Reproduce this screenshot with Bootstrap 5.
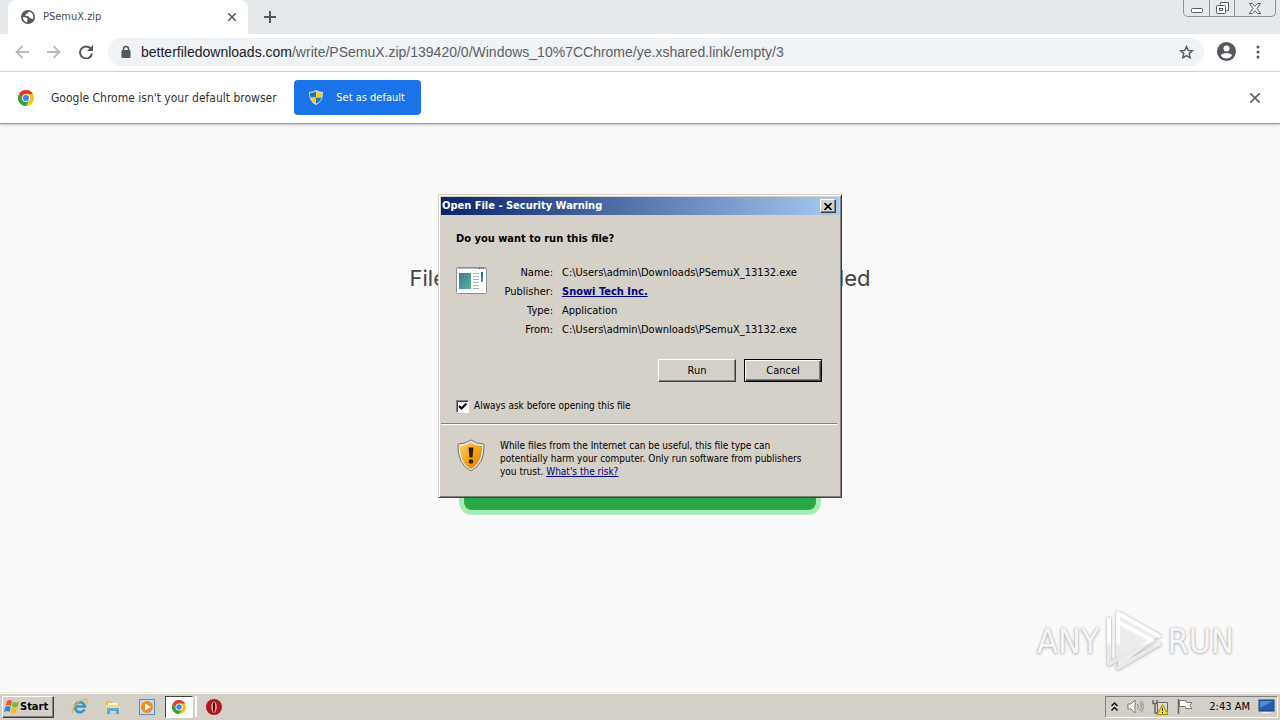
<!DOCTYPE html>
<html lang="en">
<head>
    <meta charset="UTF-8">
    <meta name="viewport" content="width=device-width, initial-scale=1.0">
    <title>PSemuX.zip</title>
    <link href="https://cdn.jsdelivr.net/npm/bootstrap@5.3.0/dist/css/bootstrap.min.css" rel="stylesheet">
    <style>
        body {
            font-family: "DejaVu Sans Condensed", "DejaVu Sans", sans-serif;
            font-size: 11px;
            line-height: 16px;
            color: #000;
            background: #f9f9f9;
        }
        svg { display: block; flex: none; }
        button { font-family: inherit; }
        .plain-btn {
            border: 0;
            padding: 0;
            background: none;
            display: flex;
            align-items: center;
            justify-content: center;
        }

        /* browser */
        .tab-strip { height: 34px; background: #e5e9ec; padding-left: 8px; }
        .page-tab {
            width: 240px;
            height: 34px;
            padding: 0 8px 0 13px;
            gap: 8px;
            background: #fff;
            border-radius: 8px 8px 0 0;
            color: #4a4d51;
        }
        .new-tab { width: 28px; height: 34px; margin-left: 8px; }
        .win-controls {
            height: 17px;
            margin-right: 4px;
            border: 1px solid #8c9196;
            border-top: 0;
            border-radius: 0 0 5px 5px;
        }
        .win-controls button { width: 25px; }
        .win-controls button + button { border-left: 1px solid #8c9196; }
        .win-controls button:last-child { width: 41px; }
        .toolbar { height: 38px; padding: 0 6px 2px; background: #fff; border-bottom: 1px solid #d5d7d9; }
        .tool { width: 32px; height: 32px; }
        .address-bar {
            height: 28px;
            margin: 0 6px;
            padding: 0 10px 0 12px;
            gap: 9px;
            border-radius: 14px;
            background: #f0f3f5;
            font: 14px/28px "Liberation Sans", sans-serif;
            color: #5c6064;
        }
        .address-bar b { font-weight: normal; color: #202124; }
        .default-bar {
            height: 52px;
            padding: 0 16px 0 18px;
            gap: 17px;
            background: #fff;
            border-bottom: 1px solid #97999b;
            box-shadow: 0 1px 3px #c4c4c4;
            font-size: 12px;
            color: #333;
        }
        .default-btn {
            height: 35px;
            width: 127px;
            gap: 13px;
            border-radius: 4px;
            background: #1a73e8;
            color: #fff;
            font-size: 11px;
        }

        /* page behind the dialog */
        .download-page { padding-top: 138px; color: #444; font: 22px/32px Inter, sans-serif; }
        .download-page h1 { width: 461px; font: inherit; }
        .download-btn {
            width: 352px;
            height: 60px;
            margin-top: 156px;
            border: 0;
            border-radius: 8px;
            background: #28a745;
            box-shadow: 0 0 0 5px #a9e8b8;
        }
        .watermark {
            right: 46px;
            bottom: 20px;
            gap: 5px;
            font: 34px/60px "Liberation Sans Narrow", "DejaVu Sans Condensed", sans-serif;
            color: #f6f6f6;
            text-shadow: 0 0 2px #aaa, 0 1px 3px #bbb;
        }
        .watermark svg { filter: drop-shadow(0 0 1px #aaa) drop-shadow(0 1px 1px #ddd); }

        /* classic dialog */
        .dialog-box {
            width: 404px;
            padding: 1px;
            background: #d5d0c8;
            border: 1px solid;
            border-color: #d4d0c8 #404040 #404040 #d4d0c8;
            box-shadow: inset 1px 1px #fff, inset -1px -1px #808080;
        }
        .dialog-title {
            height: 18px;
            margin: 1px 1px 0;
            padding: 0 3px 0 1px;
            background: linear-gradient(90deg, #0a246a, #a6caf0);
            color: #fff;
            font-size: 11px;
            line-height: 18px;
            font-weight: bold;
        }
        .raised {
            border: 1px solid;
            border-color: #fff #404040 #404040 #fff;
            box-shadow: inset -1px -1px #808080;
            background: #d4d0c8;
            color: #000;
            padding: 0;
        }
        .dialog-close { width: 16px; height: 14px; }
        .dialog-main { padding: 16px 18px 9px 16px; }
        .file-facts { grid-template-columns: 58px 1fr; column-gap: 9px; line-height: 19px; }
        .file-facts dt { font-weight: normal; text-align: right; }
        .dialog-box a { color: #000080; }
        .dialog-btn { width: 78px; height: 23px; }
        .dialog-btn.is-default { border: 1px solid #000; box-shadow: inset 1px 1px #fff, inset -1px -1px #404040, inset -2px -2px #808080; }
        .ask-check {
            appearance: none;
            width: 13px;
            height: 13px;
            margin: 0 5px 0 0;
            border: 1px solid;
            border-color: #808080 #fff #fff #808080;
            box-shadow: inset 1px 1px #404040;
            background: #fff;
        }
        .ask-check:checked {
            background: #fff url("data:image/svg+xml,%3Csvg xmlns='http://www.w3.org/2000/svg' viewBox='0 0 11 11'%3E%3Cpath d='M2 5l2.500 2.500 5-5' fill='none' stroke='%23000' stroke-width='2.200'/%3E%3C/svg%3E");
        }
        .ask-row label, .dialog-note p { font-size: 10px; }
        .groove { height: 2px; margin: 0 3px 0 1px; border-top: 1px solid #808080; border-bottom: 1px solid #fff; }
        .dialog-note { padding: 14px 30px 18px 17px; gap: 15px; }
        .dialog-note p { line-height: 13px; }

        /* taskbar */
        .taskbar { height: 28px; padding: 0 2px; background: #d4d0c8; border-top: 1px solid #ece9e2; box-shadow: inset 0 1px #fff; }
        .start-btn { width: 52px; height: 22px; font-weight: bold; }
        .quick { width: 34px; height: 22px; }
        .running { width: 28px; height: 22px; margin: 0 2px 0 1px; border: 1px solid; border-color: #404040 #fff #fff #404040; background: #fff; }
        .tray { height: 22px; padding: 0 2px 0 4px; gap: 8px; border: 1px solid; border-color: #808080 #fff #fff #808080; }
    </style>
</head>
<body>
    <!-- shared logo artwork -->
    <svg class="position-absolute" width="0" height="0" aria-hidden="true">
        <symbol id="chrome-logo" viewBox="0 0 16 16">
            <circle cx="8" cy="8" r="8" fill="#fbc116"/>
            <path d="M8 8L4.540 10 1.070 4A8 8 0 0 0 8 16l3.460-6z" fill="#34a046"/>
            <path d="M1.070 4A8 8 0 0 1 14.930 4H8L4.540 10z" fill="#e23b2e"/>
            <circle cx="8" cy="8" r="4" fill="#fff"/>
            <circle cx="8" cy="8" r="3.100" fill="#4285f4"/>
        </symbol>
    </svg>

    <div class="d-flex flex-column vh-100">
        <div class="flex-grow-1 d-flex flex-column position-relative overflow-hidden">
            <header>
                <div class="tab-strip d-flex align-items-start">
                    <div class="page-tab d-flex align-items-center">
                        <svg width="14" height="14" viewBox="0 0 14 14"><circle cx="7" cy="7" r="7" fill="#54585d"/><path d="M2 7l3 .500 2 1.500-1 1 .500 2.500C3.500 12 2 10 1.800 8zM7.500 1.700l-1 1.800-1.800.500-.200 2 3 .200L9 8.300l3 .700C13.200 5 11.500 2 7.500 1.700z" fill="#fff"/></svg>
                        <span class="flex-grow-1">PSemuX.zip</span>
                        <button class="plain-btn p-1" aria-label="Close tab"><svg width="8" height="8" viewBox="0 0 8 8"><path d="M0 0l8 8M8 0L0 8" stroke="#54585d" stroke-width="1.500"/></svg></button>
                    </div>
                    <button class="plain-btn new-tab" aria-label="New tab"><svg width="12" height="12" viewBox="0 0 12 12"><path d="M6 0v12M0 6h12" stroke="#54585d" stroke-width="2"/></svg></button>
                    <div class="win-controls d-flex ms-auto">
                        <button class="plain-btn" aria-label="Minimize"><svg width="12" height="14" viewBox="0 0 12 14"><rect x=".500" y="7.500" width="11" height="4" rx="1" fill="#fff" stroke="#555b66"/></svg></button>
                        <button class="plain-btn" aria-label="Restore"><svg width="13" height="14" viewBox="0 0 13 14"><path d="M4.500 3.500v-2h8v8h-2" fill="#fff" stroke="#555b66"/><rect x=".500" y="4.500" width="9" height="8" rx="1" fill="#fff" stroke="#555b66"/><rect x="3.500" y="7.500" width="3" height="2" fill="none" stroke="#555b66"/></svg></button>
                        <button class="plain-btn" aria-label="Close"><svg width="12" height="11" viewBox="0 0 12 11"><path d="M.500.500h3l2.500 3 2.500-3h3L8 5.500l3.500 5h-3L6 7.500l-2.500 3h-3L4 5.500z" fill="#fff" stroke="#555b66"/></svg></button>
                    </div>
                </div>

                <nav class="toolbar d-flex align-items-center">
                    <button class="plain-btn tool" aria-label="Back"><svg width="14" height="14" viewBox="0 0 14 14"><path d="M14 7H1.500M7.500 1l-6 6 6 6" fill="none" stroke="#b9bbbe" stroke-width="1.800"/></svg></button>
                    <button class="plain-btn tool" aria-label="Forward"><svg width="14" height="14" viewBox="0 0 14 14"><path d="M0 7h12.500M6.500 1l6 6-6 6" fill="none" stroke="#b9bbbe" stroke-width="1.800"/></svg></button>
                    <button class="plain-btn tool" aria-label="Reload"><svg width="14" height="14" viewBox="0 0 14 14"><path d="M12 4A6 6 0 1 0 13 8.500" fill="none" stroke="#54585d" stroke-width="2"/><path d="M14 0v6H8z" fill="#54585d"/></svg></button>
                    <div class="address-bar flex-grow-1 d-flex align-items-center">
                        <svg width="12" height="14" viewBox="0 0 12 14"><path d="M3.500 6V4a2.500 2.500 0 0 1 5 0v2" fill="none" stroke="#54585d" stroke-width="1.500"/><rect x="1.500" y="5" width="9" height="8" rx="1" fill="#54585d"/></svg>
                        <span class="flex-grow-1"><b>betterfiledownloads.com</b>/write/PSemuX.zip/139420/0/Windows_10%7CChrome/ye.xshared.link/empty/3</span>
                        <button class="plain-btn" aria-label="Bookmark"><svg width="15" height="14" viewBox="0 0 15 14"><path d="M7.500 1.500l1.700 3.900 4.200.400-3.200 2.800 1 4.200-3.700-2.200-3.700 2.200 1-4.200-3.200-2.800 4.200-.400z" fill="none" stroke="#54585d" stroke-width="1.400"/></svg></button>
                    </div>
                    <button class="plain-btn tool" aria-label="Profile"><svg width="19" height="19" viewBox="0 0 19 19"><circle cx="9.500" cy="9.500" r="9.500" fill="#54585d"/><circle cx="9.500" cy="6.500" r="3" fill="#fff"/><path d="M3.800 13.500c1-3.500 10.400-3.500 11.400 0a7 7 0 0 1-11.400 0z" fill="#fff"/></svg></button>
                    <button class="plain-btn tool" aria-label="Menu"><svg width="4" height="14" viewBox="0 0 4 14"><g fill="#54585d"><circle cx="2" cy="2" r="1.500"/><circle cx="2" cy="7" r="1.500"/><circle cx="2" cy="12" r="1.500"/></g></svg></button>
                </nav>

                <div class="default-bar d-flex align-items-center">
                    <svg width="16" height="16"><use href="#chrome-logo"/></svg>
                    <span>Google Chrome isn't your default browser</span>
                    <button class="default-btn plain-btn">
                        <svg width="14" height="15" viewBox="0 0 14 15"><path d="M7 0q3 2 7 2 0 10-7 13Q0 12 0 2q4 0 7-2z" fill="#d8e6f0"/><path d="M7 1.300V7.500H1.300Q1 5 1 3q3.500 0 6-1.700zM7 7.500h5.500Q11.500 12 7 13.800z" fill="#1976c8"/><path d="M7 1.300V7.500h5.700Q13 5 13 3 9.500 3 7 1.300zM7 7.500H1.500Q2.500 12 7 13.800z" fill="#fbc91c"/></svg>
                        <span>Set as default</span>
                    </button>
                    <button class="plain-btn ms-auto p-1" aria-label="Dismiss"><svg width="10" height="10" viewBox="0 0 10 10"><path d="M0 0l10 10M10 0L0 10" stroke="#5f6368" stroke-width="1.600"/></svg></button>
                </div>
            </header>

            <main class="download-page d-flex flex-column align-items-center">
                <h1 class="d-flex justify-content-between m-0"><span>File</span><span>ded</span></h1>
                <button class="download-btn" aria-label="Download"></button>
            </main>

            <div class="watermark position-absolute d-flex align-items-center">
                <span>ANY</span>
                <svg width="58" height="62" viewBox="0 0 58 62">
                    <defs><linearGradient id="fade" gradientUnits="userSpaceOnUse" x1="0" y1="0" x2="0" y2="62"><stop offset=".500" stop-color="#fff"/><stop offset=".600" stop-color="#e9e9e9"/></linearGradient></defs>
                    <path d="M14 4l41 22-41 32z" fill="#ececec"/>
                    <g fill="none" stroke="url(#fade)" stroke-width="4" stroke-linejoin="round" stroke-linecap="round"><path d="M14 45V3l41 23"/><path d="M5 9v45l9-5 34-19-34-18"/><path d="M14 58l41-24"/></g>
                </svg>
                <span>RUN</span>
            </div>

            <div class="position-absolute top-0 start-0 w-100 h-100 d-flex align-items-center justify-content-center">
                <section class="dialog-box" role="dialog" aria-labelledby="dlgTitle">
                    <div class="dialog-title d-flex align-items-center justify-content-between">
                        <span id="dlgTitle">Open File - Security Warning</span>
                        <button class="raised dialog-close d-flex align-items-center justify-content-center" aria-label="Close"><svg width="8" height="7" viewBox="0 0 8 7"><path d="M.500 0l7 7M7.500 0l-7 7" stroke="#000" stroke-width="1.600"/></svg></button>
                    </div>
                    <div class="dialog-main">
                        <div class="fw-bold">Do you want to run this file?</div>
                        <div class="d-flex mt-3">
                            <svg class="mt-1" width="31" height="27" viewBox="0 0 31 27">
                                <defs><linearGradient id="pane" x2="1" y2="1"><stop stop-color="#3d78a8"/><stop offset="1" stop-color="#58b58b"/></linearGradient></defs>
                                <rect x=".500" y=".500" width="30" height="26" rx="1" fill="#fff" stroke="#8b8d94"/>
                                <path d="M1 1.500h29" stroke="#b4b6c0"/><path d="M23 1.500h6" stroke="#444" stroke-dasharray="1 1"/>
                                <rect x="3" y="6" width="12" height="16" fill="url(#pane)"/>
                                <path d="M17 6.500h6M17 9.500h6M17 12.500h6M17 15.500h6M17 18.500h6M17 21.500h6" stroke="#b0b4b8"/>
                                <rect x="25" y="5" width="2" height="10" fill="#386f96"/><rect x="25" y="11" width="2" height="4" fill="#49a06f"/>
                            </svg>
                            <dl class="file-facts d-grid flex-grow-1 m-0 ps-2">
                                <dt>Name:</dt><dd class="m-0">C:\Users\admin\Downloads\PSemuX_13132.exe</dd>
                                <dt>Publisher:</dt><dd class="m-0"><a class="fw-bold" href="#">Snowi Tech Inc.</a></dd>
                                <dt>Type:</dt><dd class="m-0">Application</dd>
                                <dt>From:</dt><dd class="m-0">C:\Users\admin\Downloads\PSemuX_13132.exe</dd>
                            </dl>
                        </div>
                        <div class="d-flex justify-content-end gap-2 pt-3 mt-1">
                            <button class="raised dialog-btn">Run</button>
                            <button class="raised dialog-btn is-default">Cancel</button>
                        </div>
                        <div class="ask-row d-flex align-items-center mt-3">
                            <input class="ask-check" type="checkbox" id="alwaysAsk" checked>
                            <label for="alwaysAsk">Always ask before opening this file</label>
                        </div>
                    </div>
                    <div class="groove"></div>
                    <div class="dialog-note d-flex">
                        <svg width="28" height="33" viewBox="0 0 28 33">
                            <defs><linearGradient id="gold" x2="1" y2="1"><stop stop-color="#ffd35a"/><stop offset=".500" stop-color="#f7a416"/><stop offset="1" stop-color="#d97a08"/></linearGradient></defs>
                            <path d="M14 1q6 4 13 4 1 20-13 27Q0 25 1 5q7 0 13-4z" fill="#e8e6e2" stroke="#77746e"/>
                            <path d="M14 3.500q5 3.500 11 3.500 0 17-11 23Q3 24 3 7q6 0 11-3.500z" fill="url(#gold)"/>
                            <path d="M11.500 8.500h5l-1 10h-3z" fill="#2b2008"/><circle cx="14" cy="22.500" r="2.300" fill="#2b2008"/>
                        </svg>
                        <p class="m-0">While files from the Internet can be useful, this file type can<br>potentially harm your computer. Only run software from publishers<br>you trust. <a href="#">What's the risk?</a></p>
                    </div>
                </section>
            </div>
        </div>

        <footer class="taskbar d-flex align-items-center">
            <button class="raised start-btn d-flex align-items-center">
                <svg width="17" height="15" viewBox="0 0 17 15"><path d="M4 2q3-2 5 0L8 7Q5 5 2.500 7z" fill="#e8582a"/><path d="M10 2.500q3 2 6 0L14.500 7.500q-3 2-5.500 0z" fill="#7cb83a"/><path d="M2.200 8q3-2 5.500 0l-1.200 5Q4 11 1 13z" fill="#3b83d0"/><path d="M8.700 8.500q3 2 5.500 0L13 13.500q-3 2-5.500 0z" fill="#f8bd1c"/></svg>
                <span>Start</span>
            </button>
            <button class="plain-btn quick ms-2" aria-label="Internet Explorer"><svg width="17" height="17" viewBox="0 0 17 17"><path d="M13.500 11.500a5 5 0 1 1 .500-3H4.500" fill="none" stroke="#2b94db" stroke-width="2.600"/><path d="M2 15.500C-2 13 9 0 15 1.500q2 1 .500 4" fill="none" stroke="#e8b63a" stroke-width="1.300"/></svg></button>
            <button class="plain-btn quick" aria-label="Explorer"><svg width="16" height="16" viewBox="0 0 16 16"><path d="M1 2h5l1 2h7v9H1z" fill="#e5bd50"/><path d="M3 4h10v4H3z" fill="#fff6cf"/><path d="M1 6h14v7H1z" fill="#f4dc8c"/><path d="M2 15V9h12v6h-3v-3H5v3z" fill="#57abd8"/></svg></button>
            <button class="plain-btn quick" aria-label="Media Player"><svg width="16" height="16" viewBox="0 0 16 16"><rect x=".500" y=".500" width="15" height="15" fill="#c5dcf0" stroke="#5b8fc4"/><circle cx="8" cy="8" r="6" fill="#f18c1d"/><path d="M6 4.500l6 3.500-6 3.500z" fill="#fff"/></svg></button>
            <button class="plain-btn running" aria-label="Chrome"><svg width="14" height="14"><use href="#chrome-logo"/></svg></button>
            <div class="border-start border-end border-white h-75"></div>
            <button class="plain-btn quick" aria-label="Opera"><svg width="16" height="16" viewBox="0 0 16 16"><circle cx="8" cy="8" r="8" fill="#b5141c"/><ellipse cx="8" cy="8" rx="2.600" ry="5.500" fill="#e8dcd6"/><ellipse cx="8" cy="8" rx="1.300" ry="5" fill="#5a0a0e"/></svg></button>

            <div class="tray d-flex align-items-center ms-auto">
                <svg width="9" height="10" viewBox="0 0 9 10"><path d="M1.500 4l3-3 3 3M1.500 8.500l3-3 3 3" fill="none" stroke="#000" stroke-width="1.400"/></svg>
                <svg width="17" height="15" viewBox="0 0 17 15"><path d="M1 5h3l4-4v13l-4-4H1z" fill="#fff" stroke="#777"/><path d="M10.500 5q2 2.500 0 5M12.500 3q3.500 4.500 0 9M14.500 1.500q3.500 6 0 12" fill="none" stroke="#888"/></svg>
                <svg width="17" height="16" viewBox="0 0 17 16"><path d="M5.500 3.500h10v9h-10z" fill="#ddd" stroke="#666"/><path d="M1 1v3.500h4V1M3 4.500V14h4" fill="none" stroke="#666" stroke-width="1.500"/><path d="M10.500 5.500l5.500 10H5z" fill="#ffe11a" stroke="#9c8500"/><path d="M10.500 9v3M10.500 13v1.200" stroke="#000"/></svg>
                <svg width="16" height="15" viewBox="0 0 16 15"><path d="M1.500 0v15" stroke="#666" stroke-width="1.500"/><path d="M2.500 1.500h6l1 2h5.500l-2 3 2 3h-6l-1-2H2.500z" fill="#fff" stroke="#777"/></svg>
                <span class="ms-2">2:43 AM</span>
                <svg width="17" height="15" viewBox="0 0 17 15"><rect x="1" y="1" width="15" height="11" fill="#235fae" stroke="#174178"/><path d="M2 2h13L2 9z" fill="#4d8cd6"/><path d="M4 13.500h9" stroke="#eef"/></svg>
            </div>
        </footer>
    </div>
    <script src="https://cdn.jsdelivr.net/npm/bootstrap@5.3.0/dist/js/bootstrap.bundle.min.js"></script>
</body>
</html>
